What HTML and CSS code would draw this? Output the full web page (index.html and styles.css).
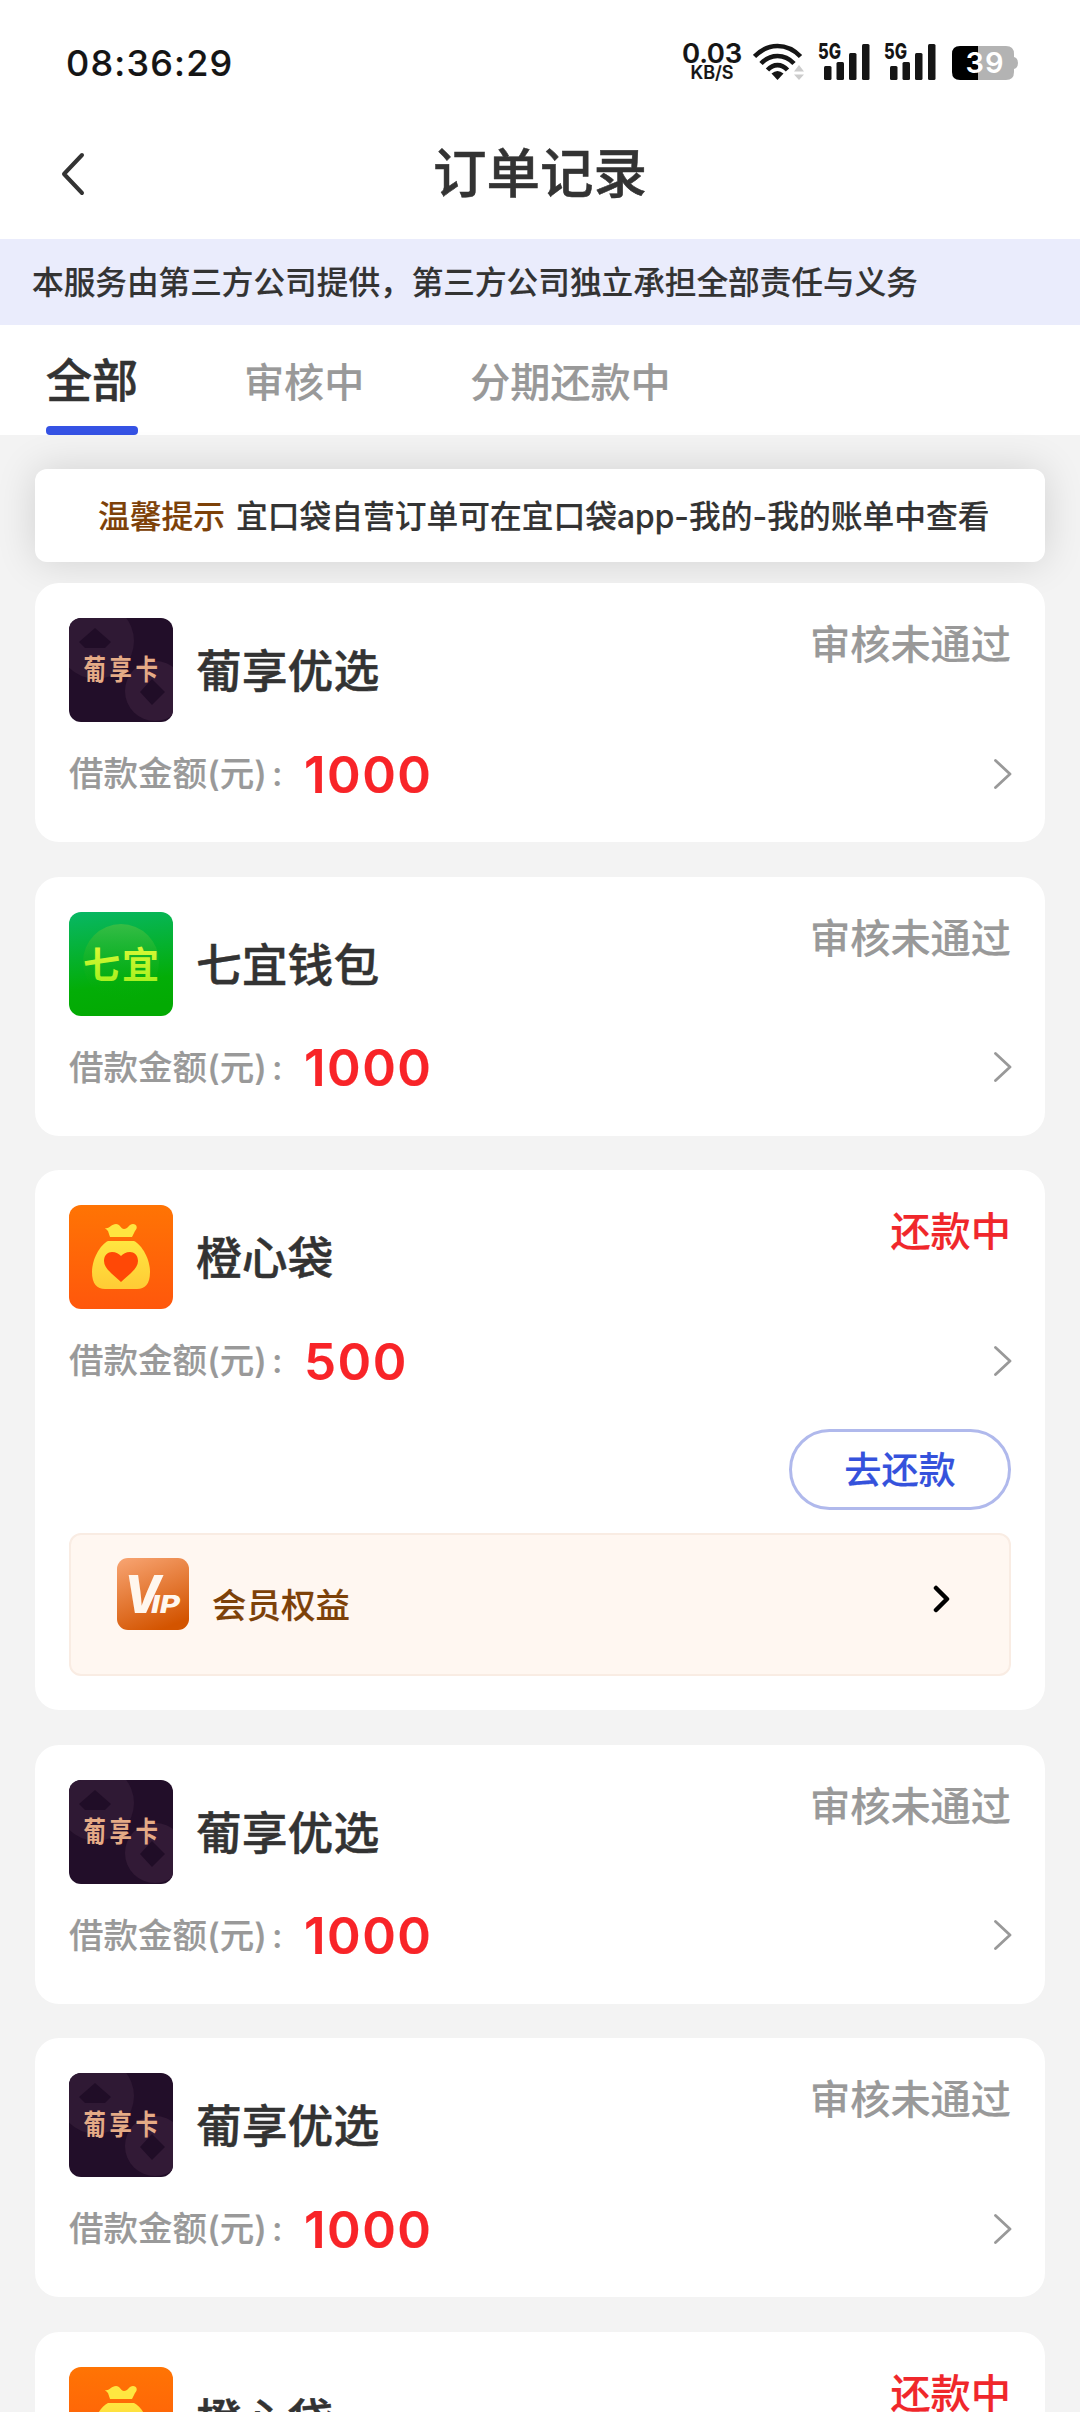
FILE: index.html
```html
<!DOCTYPE html>
<html lang="zh-CN">
<head>
<meta charset="utf-8">
<title>订单记录</title>
<link rel="stylesheet" href="styles.css">
</head>
<body>
<svg class="defs" width="0" height="0" aria-hidden="true">
  <defs>
    <linearGradient id="g-green" x1="0" y1="0" x2="0.15" y2="1"><stop offset="0" stop-color="#08b765"/><stop offset="0.75" stop-color="#03ad07"/><stop offset="1" stop-color="#03aa03"/></linearGradient>
    <linearGradient id="g-ball" x1="0" y1="0" x2="0" y2="1"><stop offset="0" stop-color="#36bd45"/><stop offset="0.75" stop-color="#0aae12" stop-opacity="0.3"/><stop offset="1" stop-color="#03ad07" stop-opacity="0"/></linearGradient>
    <linearGradient id="g-lime" x1="0" y1="0" x2="0" y2="1"><stop offset="0" stop-color="#e8fa3c"/><stop offset="1" stop-color="#9bf01a"/></linearGradient>
    <linearGradient id="g-orange" x1="0" y1="0" x2="0" y2="1"><stop offset="0" stop-color="#ff7404"/><stop offset="1" stop-color="#ff570c"/></linearGradient>
    <linearGradient id="g-bag" x1="0" y1="0" x2="0" y2="1"><stop offset="0" stop-color="#ffe640"/><stop offset="1" stop-color="#ffcb35"/></linearGradient>
    <linearGradient id="g-vip" x1="0.2" y1="0" x2="0.6" y2="1"><stop offset="0" stop-color="#f6a06c"/><stop offset="1" stop-color="#d35400"/></linearGradient>
    <symbol id="logo-grape" viewBox="0 0 104 104">
      <rect width="104" height="104" fill="#220e29"/>
      <circle cx="27" cy="23" r="38" fill="#2f1934"/>
      <path d="M26 10 42 24 36 30H16L10 24Z" fill="#200d27"/>
      <circle cx="86" cy="73" r="30" fill="#321a36"/>
      <path d="M83 61 96 74 83 87 71 74Z" fill="#200d27"/>
      <text class="logo-grape-text" transform="scale(.8 1)" x="18" y="62.500">葡享卡</text>
    </symbol>
    <symbol id="logo-qiyi" viewBox="0 0 104 104">
      <rect width="104" height="104" fill="url(#g-green)"/>
      <circle cx="52" cy="50" r="38" fill="url(#g-ball)"/>
      <text class="logo-qiyi-text" x="14" y="67" fill="url(#g-lime)">七宜</text>
    </symbol>
    <symbol id="logo-bag" viewBox="0 0 104 104">
      <rect width="104" height="104" fill="url(#g-orange)"/>
      <path d="M36 23C41 24 42 19 47 19C51 19 52 24 55 24C59 24 60 19 64 19C68 19 69 23 66 26L63 32H41L39 26Z" fill="#ffe640"/>
      <path d="M39 36H65C73 40 81 54 81 67C81 79 76 84 68 84H36C28 84 23 79 23 67C23 54 31 40 39 36Z" fill="url(#g-bag)"/>
      <path d="M52 77C46 71 35 64 35 56C35 50 39 47 43 47C47 47 50 49 52 51C54 49 57 47 61 47C65 47 69 50 69 56C69 64 58 71 52 77Z" fill="#ff4806"/>
    </symbol>
    <symbol id="chevron" viewBox="0 0 18 30"><path d="M1.5 1.5 16 15 1.5 28.5" fill="none" stroke="#999" stroke-width="2.8" stroke-linecap="round" stroke-linejoin="round"/></symbol>
    <symbol id="signal" viewBox="0 0 52 38">
      <text class="signal-text" x="0" y="16" textLength="23" lengthAdjust="spacingAndGlyphs">5G</text>
      <rect x="6" y="23" width="7.500" height="14" rx="1.5"/><rect x="18.500" y="19" width="7.500" height="18" rx="1.5"/><rect x="31" y="10" width="7.500" height="27" rx="1.5"/><rect x="44" y="1" width="7.500" height="36" rx="1.5"/>
    </symbol>
  </defs>
</svg>

<div class="status">
  <div class="clock">08:36:29</div>
  <div class="speed"><span class="rate">0.03</span><span class="unit">KB/S</span></div>
  <svg class="wifi" viewBox="0 0 52 38">
    <g fill="none" stroke="#151515" stroke-width="4.600"><path d="M1.500 13.500C15 -.5 34 -.5 47.500 13.500"/><path d="M8 20.500C17.500 10.500 31.500 10.500 41 20.500"/><path d="M14.500 27C20.500 20.500 28.500 20.500 34.500 27"/></g>
    <path d="M24.500 37 18.500 30.500Q24.500 25.500 30.500 30.500Z" fill="#151515"/>
    <path d="M41 28.500 46 22 51 28.500ZM41 31.500H51L46 37Z" fill="#ccc"/>
  </svg>
  <svg class="signal"><use href="#signal"/></svg>
  <svg class="signal"><use href="#signal"/></svg>
  <svg class="battery" viewBox="0 0 67 34">
    <path d="M26 0H54Q62 0 62 8V11Q66 12 66 17T62 23V26Q62 34 54 34H26Z" fill="#b3b3b3"/>
    <path d="M26 0H8Q0 0 0 8V26Q0 34 8 34H26Z" fill="#000"/>
    <text class="battery-text" x="13.500" y="27" textLength="38" lengthAdjust="spacing">39</text>
  </svg>
</div>

<header class="header">
  <svg class="back" viewBox="0 0 24 44"><path d="M21 3 3 22 21 41" fill="none" stroke="#333" stroke-width="4" stroke-linecap="round" stroke-linejoin="round"/></svg>
  <h1 class="title">订单记录</h1>
</header>

<div class="notice">本服务由第三方公司提供，第三方公司独立承担全部责任与义务</div>

<nav class="tabs">
  <span class="tab active">全部</span>
  <span class="tab">审核中</span>
  <span class="tab">分期还款中</span>
</nav>

<main class="list">
  <div class="tip"><span class="tip-label">温馨提示</span><span class="tip-text">宜口袋自营订单可在宜口袋app-我的-我的账单中查看</span></div>

  <section class="card">
    <div class="top"><svg class="logo"><use href="#logo-grape"/></svg><h2 class="name">葡享优选</h2><span class="state">审核未通过</span></div>
    <div class="amount"><span class="label">借款金额(元)</span><span class="colon">:</span><b class="value">1000</b><svg class="chevron"><use href="#chevron"/></svg></div>
  </section>

  <section class="card">
    <div class="top"><svg class="logo"><use href="#logo-qiyi"/></svg><h2 class="name">七宜钱包</h2><span class="state">审核未通过</span></div>
    <div class="amount"><span class="label">借款金额(元)</span><span class="colon">:</span><b class="value">1000</b><svg class="chevron"><use href="#chevron"/></svg></div>
  </section>

  <section class="card">
    <div class="top"><svg class="logo"><use href="#logo-bag"/></svg><h2 class="name">橙心袋</h2><span class="state repaying">还款中</span></div>
    <div class="amount"><span class="label">借款金额(元)</span><span class="colon">:</span><b class="value">500</b><svg class="chevron"><use href="#chevron"/></svg></div>
    <button class="repay">去还款</button>
    <div class="vip">
      <svg class="vip-icon" viewBox="0 0 72 72"><rect width="72" height="72" rx="11" fill="url(#g-vip)"/><text class="vip-v" x="7" y="55" textLength="37" lengthAdjust="spacingAndGlyphs">V</text><text class="vip-ip" x="34" y="55" textLength="29" lengthAdjust="spacingAndGlyphs">IP</text></svg>
      <span class="vip-text">会员权益</span>
      <svg class="vip-arrow" viewBox="0 0 18 28"><path d="M3 3 14 14 3 25" fill="none" stroke="#000" stroke-width="4.500" stroke-linecap="round" stroke-linejoin="round"/></svg>
    </div>
  </section>

  <section class="card">
    <div class="top"><svg class="logo"><use href="#logo-grape"/></svg><h2 class="name">葡享优选</h2><span class="state">审核未通过</span></div>
    <div class="amount"><span class="label">借款金额(元)</span><span class="colon">:</span><b class="value">1000</b><svg class="chevron"><use href="#chevron"/></svg></div>
  </section>

  <section class="card">
    <div class="top"><svg class="logo"><use href="#logo-grape"/></svg><h2 class="name">葡享优选</h2><span class="state">审核未通过</span></div>
    <div class="amount"><span class="label">借款金额(元)</span><span class="colon">:</span><b class="value">1000</b><svg class="chevron"><use href="#chevron"/></svg></div>
  </section>

  <section class="card">
    <div class="top"><svg class="logo"><use href="#logo-bag"/></svg><h2 class="name">橙心袋</h2><span class="state repaying">还款中</span></div>
  </section>
</main>
</body>
</html>
```
FILE: styles.css
```css
* { box-sizing: border-box; }
html, body { margin: 0; height: 2412px; overflow: hidden; }
body {
  width: 1080px;
  display: flex;
  flex-direction: column;
  background: #f3f3f3;
  color: #333;
  font-family: Inter, "Noto Sans CJK SC", sans-serif;
  font-weight: 500;
  -webkit-text-stroke: 0.15px currentColor;
}
.defs { position: absolute; }
svg { display: block; flex: none; -webkit-text-stroke: 0; }

.status {
  flex: none;
  height: 108px;
  padding: 43px 61px 0 66px;
  display: flex;
  align-items: flex-start;
  background: #fff;
  color: #151515;
}
.clock { flex: 1; font-size: 36px; line-height: 41px; letter-spacing: 1.2px; white-space: nowrap; }
.speed { width: 62px; margin-right: 10px; display: flex; flex-direction: column; align-items: center; }
.rate { font-size: 27.5px; font-weight: 600; line-height: 21px; letter-spacing: -0.3px; }
.unit { font-size: 18px; font-weight: 600; line-height: 18px; }
.wifi { width: 52px; height: 38px; margin-right: 13px; }
.signal { width: 52px; height: 38px; margin-right: 14px; fill: #151515; }
.signal-text { font: 800 21.5px Inter, sans-serif; }
.battery { width: 67px; height: 34px; margin: 3px 0 0 2px; }
.battery-text { font: 600 29px Inter, sans-serif; fill: #fff; }

.header {
  flex: none;
  height: 131px;
  padding-left: 61px;
  padding-right: 85px;
  display: flex;
  align-items: center;
  background: #fff;
}
.back { width: 24px; height: 44px; }
.title { flex: 1; margin: 0; text-align: center; font-size: 53.5px; font-weight: 500; line-height: 133px; -webkit-text-stroke-width: 0.5px; }

.notice {
  flex: none;
  height: 86px;
  padding-left: 32px;
  background: #eaecfc;
  font-size: 31.65px;
  line-height: 88px;
  white-space: nowrap;
}

.tabs {
  flex: none;
  height: 110px;
  padding-left: 46px;
  display: flex;
  background: #fff;
}
.tab { margin-right: 106px; color: #999; font-size: 40.1px; line-height: 115px; }
.tab.active {
  height: 110px;
  color: #333;
  font-size: 46px;
  line-height: 111px;
  -webkit-text-stroke-width: 0.5px;
  display: flex;
  flex-direction: column;
}
.tab.active::after { content: ""; height: 9px; margin-top: -10px; border-radius: 4px; background: #3552e4; }

.list { padding: 34px 35px 0; display: flex; flex-direction: column; }
.tip {
  height: 93px;
  margin-bottom: 21px;
  padding-left: 63px;
  display: flex;
  border-radius: 12px;
  background: #fff;
  box-shadow: 0 0 40px rgba(0, 0, 0, 0.14);
  font-size: 31.75px;
  line-height: 95px;
  white-space: nowrap;
}
.tip-label { margin-right: 11px; color: #7d4108; }

.card {
  margin-bottom: 34.6px;
  padding: 35px 34px 17px;
  border-radius: 24px;
  background: #fff;
  /* keeps the tip's shadow behind the first card */
  position: relative;
}
.top { height: 104px; display: flex; }
.logo { width: 104px; height: 104px; border-radius: 12px; }
.name { flex: 1; margin: 0 0 0 23px; font-size: 45.8px; font-weight: 500; line-height: 107px; white-space: nowrap; -webkit-text-stroke-width: 0.45px; }
.state { color: #999; font-size: 40.2px; line-height: 54px; }
.state.repaying { color: #f0272b; }
.amount { height: 103px; display: flex; align-items: center; }
.label { color: #999; font-size: 34.5px; line-height: 103px; }
.colon { width: 32px; margin-left: 5px; color: #999; font-size: 34.5px; }
.value { flex: 1; padding-top: 1px; color: #f82428; font-size: 51px; font-weight: 600; letter-spacing: 1.5px; }
.chevron { width: 18px; height: 30px; margin-right: -1px; }

.repay {
  display: block;
  width: 222px;
  height: 81px;
  margin: 17px 0 0 auto;
  padding: 0;
  border: 3px solid #b0b9ec;
  border-radius: 41px;
  background: #fff;
  color: #3552dc;
  font: inherit;
  font-size: 37.2px;
  line-height: 77px;
}
.vip {
  height: 143px;
  margin: 23px 0 17px;
  padding: 23px 58px 0 46px;
  display: flex;
  border: 2px solid #f9ece3;
  border-radius: 12px;
  background: #fff7f1;
}
.vip-icon { width: 72px; height: 72px; }
.vip-v { font: italic 800 52px Inter, sans-serif; fill: #fff7ee; }
.vip-ip { font: italic 800 25px Inter, sans-serif; fill: #fff7ee; }
.vip-text { flex: 1; margin-left: 23px; color: #7d4108; font-size: 34.5px; line-height: 95px; }
.vip-arrow { width: 18px; height: 28px; margin-top: 27px; }

.logo-grape-text { font: 700 28px "Noto Sans CJK SC", sans-serif; letter-spacing: 4.5px; fill: #e5ab86; }
.logo-qiyi-text { font: 700 37px "Noto Sans CJK SC", sans-serif; letter-spacing: 2px; }
```
